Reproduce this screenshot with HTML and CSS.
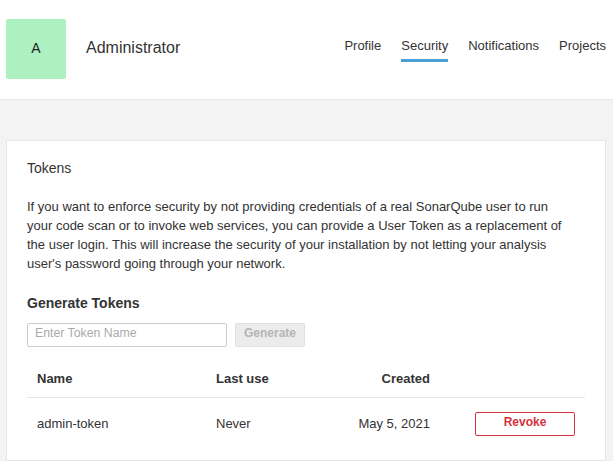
FILE: index.html
```html
<!DOCTYPE html>
<html>
<head>
<meta charset="utf-8">
<link rel="stylesheet" href="styles.css">
</head>
<body>
<header class="top">
  <div class="top-inner">
    <div class="avatar">A</div>
    <div class="user-name">Administrator</div>
    <nav class="tabs">
      <a class="tab">Profile</a>
      <a class="tab active">Security</a>
      <a class="tab">Notifications</a>
      <a class="tab">Projects</a>
    </nav>
  </div>
</header>
<main class="page">
  <section class="card">
    <h2 class="card-title">Tokens</h2>
    <p class="intro">If you want to enforce security by not providing credentials of a real SonarQube user to run your code scan or to invoke web services, you can provide a User Token as a replacement of the user login. This will increase the security of your installation by not letting your analysis user's password going through your network.</p>
    <h3 class="sub-title">Generate Tokens</h3>
    <form class="gen-form">
      <input class="token-input" type="text" placeholder="Enter Token Name">
      <button class="btn-generate" type="button" disabled>Generate</button>
    </form>
    <div class="tokens">
      <div class="row head">
        <div class="cell">Name</div>
        <div class="cell">Last use</div>
        <div class="cell right">Created</div>
        <div class="cell"></div>
      </div>
      <div class="row body">
        <div class="cell">admin-token</div>
        <div class="cell">Never</div>
        <div class="cell right">May 5, 2021</div>
        <div class="cell right"><button class="btn-revoke" type="button">Revoke</button></div>
      </div>
    </div>
  </section>
</main>
</body>
</html>
```

FILE: styles.css
```css
* { box-sizing: border-box; }
html, body { margin: 0; padding: 0; }
body {
  background: #f3f3f3;
  font-family: "Liberation Sans", Arial, sans-serif;
  font-size: 13px;
  color: #333;
  width: 613px;
  height: 461px;
  overflow: hidden;
}
.top {
  background: #fff;
  border-bottom: 1px solid #e6e6e6;
}
.top-inner {
  width: 600px;
  margin-left: 6px;
  padding: 19px 0 20px;
  display: flex;
  align-items: center;
}
.avatar {
  width: 60px;
  height: 60px;
  border-radius: 2px;
  background: #aef1c1;
  color: #222;
  font-size: 14px;
  display: flex;
  align-items: center;
  justify-content: center;
  padding-bottom: 3px;
}
.user-name {
  margin-left: 20px;
  font-size: 16px;
  line-height: 18px;
  color: #333;
  margin-bottom: 3px;
}
.tabs {
  margin-left: auto;
  align-self: flex-start;
  margin-top: 19px;
  display: flex;
  gap: 20px;
}
.tab {
  display: block;
  font-size: 13px;
  line-height: 16px;
  color: #333;
  padding-bottom: 5px;
  border-bottom: 3px solid transparent;
}
.tab.active { border-bottom-color: #4b9fd5; }
.page { padding-top: 40px; }
.card {
  width: 600px;
  margin-left: 6px;
  background: #fff;
  border: 1px solid #e6e6e6;
  padding: 19px 20px 10px;
}
.card-title {
  margin: 0 0 21px;
  font-size: 14px;
  line-height: 16px;
  font-weight: 400;
  color: #333;
}
.intro {
  margin: 0 0 22px;
  max-width: 545px;
  line-height: 19px;
}
.sub-title {
  margin: 0 0 12px;
  font-size: 14px;
  line-height: 16px;
  font-weight: 700;
}
.gen-form {
  display: flex;
  gap: 8px;
  margin: 0;
}
.token-input {
  width: 200px;
  height: 24px;
  border: 1px solid #cdcdcd;
  border-radius: 2px;
  padding: 0 7px 4px;
  font-family: inherit;
  font-size: 12.3px;
  line-height: 18px;
  color: #333;
  margin: 0;
}
.token-input::placeholder { color: #aaa; }
.btn-generate {
  width: 70px;
  height: 24px;
  border: 1px solid #e0e0e0;
  border-radius: 2px;
  background: #ececec;
  color: #b5b5b5;
  font-family: inherit;
  font-size: 12px;
  font-weight: 700;
  line-height: 18px;
  padding: 0 0 4px;
  margin: 0;
}
.tokens { margin-top: 14px; }
.row {
  display: grid;
  grid-template-columns: 179px 117px 117px 1fr;
}
.row.head { border-bottom: 1px solid #e6e6e6; }
.row.head .cell {
  padding: 10px;
  line-height: 16px;
  font-weight: 700;
}
.row.body .cell {
  padding: 14px 10px;
  line-height: 24px;
  height: 52px;
}
.cell.right { text-align: right; }
.btn-revoke {
  width: 100px;
  height: 24px;
  border: 1px solid #d4333f;
  border-radius: 2px;
  background: #fff;
  color: #d4333f;
  font-family: inherit;
  font-size: 12px;
  font-weight: 700;
  line-height: 18px;
  padding: 0 0 4px;
  margin: 0;
  vertical-align: top;
}
```
